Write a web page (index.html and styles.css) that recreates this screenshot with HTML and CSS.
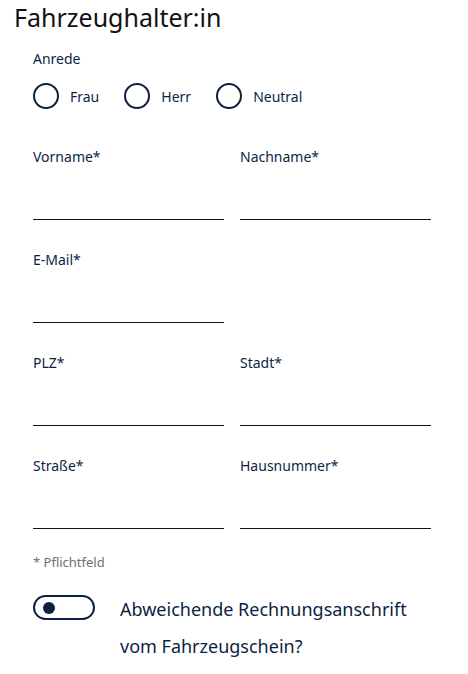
FILE: index.html
```html
<!DOCTYPE html>
<html lang="de">
<head>
<meta charset="utf-8">
<link rel="stylesheet" href="styles.css">
</head>
<body>
<h1 class="title">Fahrzeughalter:in</h1>
<form class="form">
  <div class="label anrede">Anrede</div>
  <div class="radios">
    <label class="radio"><span class="circle"></span><span class="rtext">Frau</span></label>
    <label class="radio"><span class="circle"></span><span class="rtext">Herr</span></label>
    <label class="radio"><span class="circle"></span><span class="rtext">Neutral</span></label>
  </div>
  <div class="grid">
    <div class="field"><div class="label">Vorname*</div><div class="line"></div></div>
    <div class="field"><div class="label">Nachname*</div><div class="line"></div></div>
    <div class="field"><div class="label">E-Mail*</div><div class="line"></div></div>
    <div class="field empty"></div>
    <div class="field"><div class="label">PLZ*</div><div class="line"></div></div>
    <div class="field"><div class="label">Stadt*</div><div class="line"></div></div>
    <div class="field"><div class="label">Straße*</div><div class="line"></div></div>
    <div class="field"><div class="label">Hausnummer*</div><div class="line"></div></div>
  </div>
  <div class="note">* Pflichtfeld</div>
  <div class="toggle-row">
    <span class="toggle"><span class="knob"></span></span>
    <span class="toggle-text">Abweichende Rechnungsanschrift vom Fahrzeugschein?</span>
  </div>
</form>
</body>
</html>
```
FILE: styles.css
```css
html, body {
  margin: 0;
  padding: 0;
  background: #fff;
}
body {
  font-family: "Noto Sans", "DejaVu Sans", sans-serif;
  color: #0c1f45;
}
.title {
  margin: 0;
  padding: 0 0 0 14px;
  font-size: 25px;
  font-weight: 400;
  line-height: 34px;
  color: #111;
}
.form {
  padding: 0 37px 0 33px;
}
.label {
  font-size: 14px;
  line-height: 20px;
  color: #0c1f45;
}
.anrede {
  margin-top: 15px;
}
.radios {
  display: flex;
  margin-top: 14px;
  height: 26px;
  align-items: center;
}
.radio {
  display: flex;
  align-items: center;
  margin-right: 25px;
}
.circle {
  width: 22px;
  height: 22px;
  border: 2px solid #0c1f45;
  border-radius: 50%;
  flex: none;
}
.rtext {
  font-size: 14px;
  margin-left: 11px;
}
.grid {
  display: grid;
  grid-template-columns: 191px 191px;
  column-gap: 16px;
  margin-top: 38px;
}
.field {
  height: 103px;
}
.field .line {
  margin-top: 52px;
  border-bottom: 1.5px solid #111;
}
.note {
  margin-top: -5px;
  font-size: 13px;
  color: #6f6f6f;
  line-height: 16px;
}
.toggle-row {
  display: flex;
  align-items: flex-start;
  margin-top: 24px;
}
.toggle {
  width: 58px;
  height: 21px;
  border: 2px solid #0c1f45;
  border-radius: 13px;
  flex: none;
  display: flex;
  align-items: center;
  margin-top: 1px;
}
.knob {
  width: 12px;
  height: 12px;
  border-radius: 50%;
  background: #0c1f45;
  margin-left: 8px;
}
.toggle-text {
  margin-left: 25px;
  font-size: 18px;
  line-height: 37px;
  margin-top: -3px;
  color: #0c1f45;
}
```
